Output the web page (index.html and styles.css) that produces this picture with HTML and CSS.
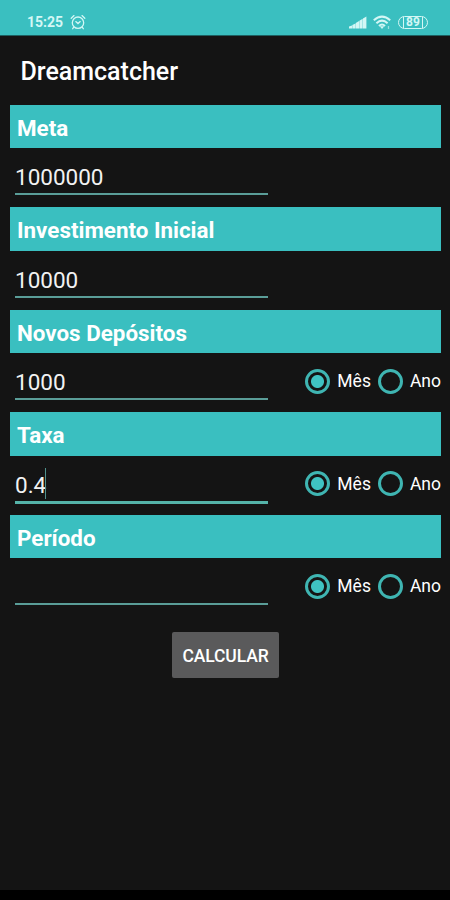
FILE: index.html
```
<!DOCTYPE html>
<html lang="pt-BR">
<head>
  <meta charset="UTF-8">
  <meta name="viewport" content="width=device-width, initial-scale=1.0">
  <title>Dreamcatcher</title>
  <link rel="stylesheet" href="styles.css">
</head>
<body>
  <div class="status-bar">
    <span class="clock">15:25</span>
    <svg class="alarm" width="16" height="16" viewBox="0 0 16 16" fill="none" stroke="currentColor" stroke-width="1.3" stroke-linecap="round">
      <circle cx="8" cy="8.7" r="5.7"/>
      <path d="M1.2 4.2 4 1.6M14.8 4.2 12 1.6M3.8 13.2 2.7 14.7M12.2 13.2l1.1 1.5M5.8 7.6 8 9.6l2.2-2"/>
    </svg>
    <div class="status-icons">
      <svg width="18" height="13" viewBox="0 0 18 13" fill="currentColor">
        <path d="M0 12.5V10.5L3 9.5v3zM3.3 12.5V9l3.2-1.6v5.1zM6.8 12.5V7l3.3-1.9v7.4zM10.4 12.5V4.8l3.3-2v9.7zM14 12.5V2.4L17.4.5v12z"/>
      </svg>
      <svg class="wifi" width="19" height="15" viewBox="0 0 19 15" fill="none" stroke="currentColor" stroke-width="2">
        <path d="M.8 5.2Q9 -2 17.2 5.2M3.4 8.2Q9 3 14.6 8.2M6 11Q9 8 12 11"/>
        <path d="M6.8 11.2h4.4L9 14z" fill="currentColor" stroke="none"/>
        <path d="M15.5 11v3" stroke-width="1.3" opacity=".6"/>
      </svg>
      <span class="battery"><span class="level">89</span></span>
    </div>
  </div>

  <h1>Dreamcatcher</h1>

  <form class="form">
    <label class="section-title" for="meta">Meta</label>
    <div class="row">
      <div class="field"><input type="text" id="meta" value="1000000"></div>
    </div>

    <label class="section-title" for="inicial">Investimento Inicial</label>
    <div class="row">
      <div class="field"><input type="text" id="inicial" value="10000"></div>
    </div>

    <label class="section-title" for="depositos">Novos Depósitos</label>
    <div class="row">
      <div class="field"><input type="text" id="depositos" value="1000"></div>
      <div class="options">
        <label><input type="radio" name="depositos" checked>Mês</label>
        <label><input type="radio" name="depositos">Ano</label>
      </div>
    </div>

    <label class="section-title" for="taxa">Taxa</label>
    <div class="row">
      <div class="field active"><input type="text" id="taxa" value="0.4"><span class="caret"></span></div>
      <div class="options">
        <label><input type="radio" name="taxa" checked>Mês</label>
        <label><input type="radio" name="taxa">Ano</label>
      </div>
    </div>

    <label class="section-title" for="periodo">Período</label>
    <div class="row">
      <div class="field"><input type="text" id="periodo" value=""></div>
      <div class="options">
        <label><input type="radio" name="periodo" checked>Mês</label>
        <label><input type="radio" name="periodo">Ano</label>
      </div>
    </div>

    <button type="button">CALCULAR</button>
  </form>

  <div class="nav-bar"></div>
</body>
</html>
```
FILE: styles.css
```
* {
  box-sizing: border-box;
}

body {
  display: flex;
  flex-direction: column;
  height: 900px;
  margin: 0;
  background: #141414;
  color: #fff;
  font-family: Roboto, sans-serif;
  overflow: hidden;
}

.status-bar {
  display: flex;
  align-items: center;
  height: 36px;
  padding: 9px 22px 0 27px;
  background: #3abfc0;
  border-bottom: 1px solid #1d6061;
  color: #d3f7f5;
}

.clock {
  font-size: 14px;
  font-weight: 700;
}

.alarm {
  margin-left: 7px;
}

.status-icons {
  display: flex;
  align-items: center;
  gap: 6px;
  margin-left: auto;
}

.battery {
  display: flex;
  align-items: center;
  justify-content: center;
  width: 30px;
  height: 13px;
  border: 1.5px solid currentColor;
  border-radius: 7px;
}

.level {
  padding: 0 2px;
  border-left: 1px solid currentColor;
  border-right: 1px solid currentColor;
  font-size: 12px;
  font-weight: 700;
  line-height: 11px;
}

h1 {
  margin: 0;
  padding: 19px 20.5px 0;
  height: 68.5px;
  font-size: 25px;
  font-weight: 500;
  line-height: 34px;
}

.form {
  display: flex;
  flex-direction: column;
  flex: 1;
  padding: 0 9px 0 10px;
}

.section-title {
  height: 43.5px;
  padding-left: 7px;
  background: #3abfc0;
  font-size: 22.4px;
  font-weight: 700;
  line-height: 47px;
}

.row {
  display: flex;
  justify-content: space-between;
  height: 59px;
  padding-left: 5px;
}

.field {
  position: relative;
  width: 253px;
  height: 47px;
  border-bottom: 2px solid #5a9d98;
}

.field.active {
  height: 48px;
  border-bottom: 3px solid #55b3a9;
}

.field input {
  width: 100%;
  height: 45px;
  padding: 13px 0 0;
  border: none;
  outline: none;
  background: none;
  color: #f2f2f2;
  font-family: inherit;
  font-size: 22.5px;
}

.caret {
  position: absolute;
  left: 30px;
  top: 12px;
  width: 1px;
  height: 31px;
  background: #4f918c;
}

.options {
  display: flex;
  gap: 7px;
  height: 56px;
}

.options label {
  display: flex;
  align-items: center;
  gap: 7px;
  font-size: 17.5px;
}

.options input {
  appearance: none;
  width: 25px;
  height: 25px;
  margin: 0;
  border: 3px solid #3fb5b2;
  border-radius: 50%;
}

.options input:checked {
  background: radial-gradient(circle, #3fc3c2 6px, transparent 7px);
}

button {
  align-self: center;
  width: 107px;
  height: 46px;
  margin-top: 15px;
  padding: 2px 0 0;
  border: none;
  border-radius: 2px;
  background: #5a5a5b;
  color: #fff;
  font-family: inherit;
  font-size: 17.5px;
  font-weight: 500;
  letter-spacing: -0.1px;
}

.nav-bar {
  height: 10px;
  background: #000;
}
```
